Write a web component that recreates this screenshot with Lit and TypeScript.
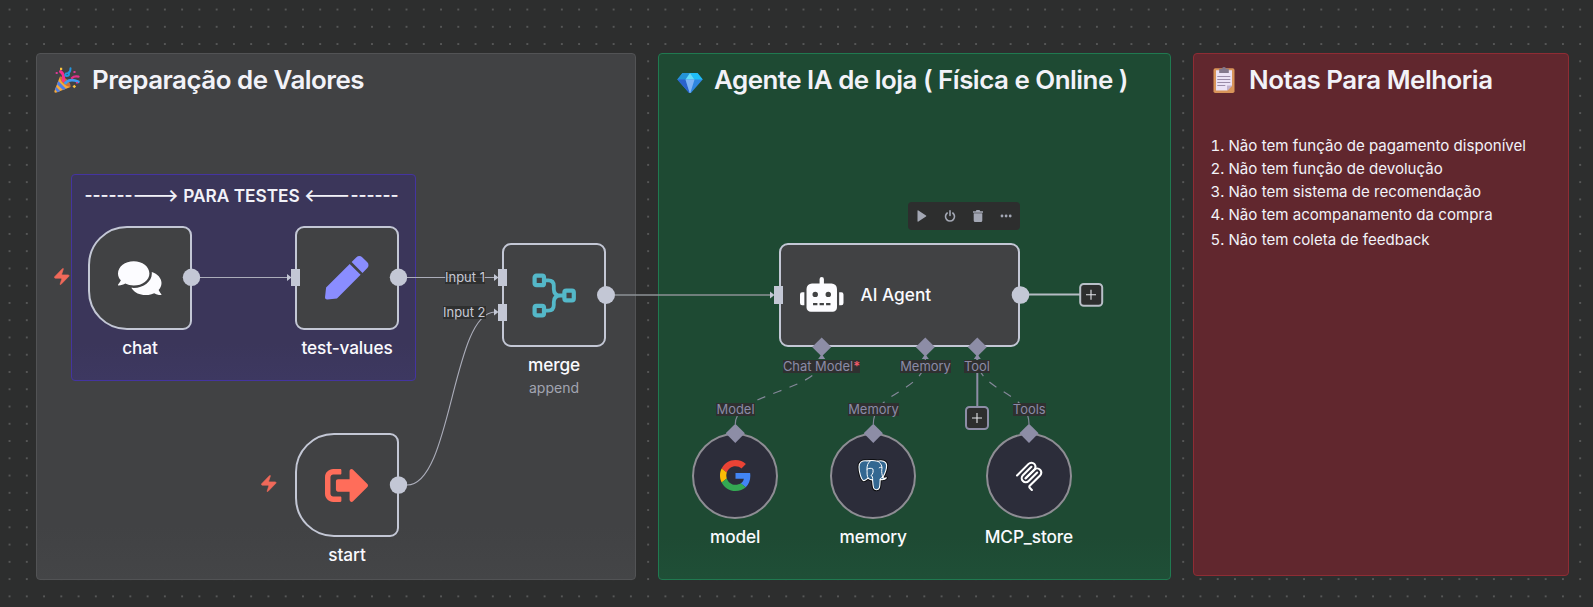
import { LitElement, html, svg, css, nothing, type TemplateResult } from "lit";
import { customElement, property } from "lit/decorators.js";
import { classMap } from "lit/directives/class-map.js";
import { styleMap } from "lit/directives/style-map.js";

type Box = { x: number; y: number; w: number; h: number };

const place = (b: Partial<Box>) =>
  styleMap({
    left: `${b.x}px`,
    top: `${b.y}px`,
    ...(b.w ? { width: `${b.w}px` } : {}),
    ...(b.h ? { height: `${b.h}px` } : {}),
  });

const icons: Record<string, TemplateResult> = {
  party: html`<svg viewBox="0 0 26 26" width="26" height="26">
    <path d="M6 9.500 16.500 20 2.500 25.600Q-.3 26.300.6 23.500Z" fill="#f6a93b" />
    <path d="M4.300 14 12 21.800 9 23 3 17.300ZM2 19.800 6.200 24.100 3.500 25.200 1.200 22.500Z" fill="#4f7fe8" />
    <path d="M6 9.500Q10 9.500 13.500 13T16.500 20Q12.500 19.500 9 16.200T6 9.500Z" fill="#c9703c" />
    <path d="M6.500 4.500Q10.500 7 9.500 13.500" fill="none" stroke="#f62d8f" stroke-width="3" stroke-linecap="round" />
    <path d="M11.500 16Q16 11 24.300 14.700" fill="none" stroke="#3f9bf0" stroke-width="2.800" stroke-linecap="round" />
    <path d="M16.500 1.200Q16.500 7 12 6.500Q10 9 13 9Q16 9 14.500 5.500" fill="none" stroke="#2196e0" stroke-width="2" stroke-linecap="round" />
    <path d="M18 11Q20 8.700 24.500 9.600" fill="none" stroke="#e0308a" stroke-width="2.300" stroke-linecap="round" />
    <path d="M6 .7h2.200v2.200H6ZM20.300 17.800l1.800 1.700-1.800 1.800-1.800-1.800Z" fill="#f9c23c" />
    <path d="M1.700 5h2v2h-2ZM19.500 4h2v2h-2ZM22 15h2v1.500h-2Z" fill="#d83a94" />
  </svg>`,
  gem: html`<svg viewBox="0 0 26 26" width="26" height="26">
    <path d="M5.500 6h15L25.700 12.600 13 27 .3 12.600Z" fill="#2f86e0" />
    <path d="M5.500 6H13L8.500 12.600H.3Z" fill="#2493d6" />
    <path d="M13 6h7.500l5.200 6.600h-8.200Z" fill="#1fc0f7" />
    <path d="M13 6l4.500 6.600h-9Z" fill="#63dcf7" />
    <path d="M.3 12.600h8.200L13 27Z" fill="#2a62cc" />
    <path d="M8.500 12.600h9L13 27Z" fill="#7fb3f5" />
  </svg>`,
  clipboard: html`<svg viewBox="0 0 22 26" width="22" height="26">
    <rect x=".5" y="1.200" width="21" height="24.800" rx="1.800" fill="#d9955a" />
    <path d="M3 3.300h16v15.200l-5 5H3Z" fill="#ebe2f5" />
    <path d="M19 18.500v.5l-4.500 4.500H14v-5Z" fill="#c2b3cf" />
    <path d="M4.300 9.500h13M4.300 12.500h13M4.300 15.500h13M4.300 18.500h8" stroke="#9a8ca8" stroke-width="1.100" />
    <path d="M6.200 1.700H9a2 1.700 0 0 1 4 0h2.800V6H6.200Z" fill="#83788c" />
  </svg>`,
  chat: html`<svg viewBox="0 32 576 448" width="43.500" height="34.500" fill="#fcfcff">
    <path
      d="M416 192c0-88.400-93.100-160-208-160S0 103.600 0 192c0 34.300 14.100 65.900 38 92-13.400 30.200-35.500 54.200-35.800 54.500-2.200 2.300-2.800 5.700-1.500 8.700S4.800 352 8 352c36.600 0 66.900-12.300 88.700-25 32.200 15.700 70.300 25 111.300 25 114.900 0 208-71.600 208-160zm122 220c23.900-26 38-57.700 38-92 0-66.900-53.500-124.200-129.300-148.100.9 6.600 1.300 13.300 1.300 20.100 0 105.900-107.700 192-240 192-10.800 0-21.300-.8-31.700-1.900C207.800 439.600 281.800 480 368 480c41 0 79.100-9.200 111.300-25 21.800 12.700 52.100 25 88.700 25 3.200 0 6.100-1.900 7.300-4.800 1.300-2.900.7-6.300-1.500-8.700-.3-.3-22.400-24.200-35.800-54.500z"
    />
  </svg>`,
  pen: html`<svg viewBox="0 0 512 512" width="43.500" height="43.500" fill="#8a8dff">
    <path
      d="M290.740 93.240l128.020 128.020-277.990 277.990-114.140 12.600C11.350 513.540-1.560 500.620.14 485.340l12.700-114.220 277.900-277.880zm207.200-19.060l-60.110-60.110c-18.750-18.750-49.160-18.750-67.910 0l-56.550 56.550 128.020 128.020 56.550-56.550c18.750-18.760 18.750-49.160 0-67.910z"
    />
  </svg>`,
  merge: html`<svg viewBox="0 0 44 45" width="44" height="45" fill="none" stroke="#54b8c9" stroke-width="4.200">
    <rect x="2.600" y="2.600" width="9.400" height="9.600" rx="1.800" />
    <rect x="2.600" y="32.800" width="9.400" height="9.600" rx="1.800" />
    <rect x="32.400" y="17.700" width="9.400" height="9.600" rx="1.800" />
    <path d="M13 7.400h3.300q5.500 0 5.500 5.500v3q0 6.600 6.600 6.600H31M13 37.600h3.300q5.500 0 5.500-5.500v-3q0-6.600 6.600-6.600" stroke-width="3.800" />
  </svg>`,
  exit: html`<svg class="exit" viewBox="0 64 504 384" width="43" height="33" fill="#ff6d5a">
    <path
      d="M497 273L329 441c-15 15-41 4.500-41-17v-96H152c-13.300 0-24-10.700-24-24v-96c0-13.300 10.700-24 24-24h136V88c0-21.400 25.900-32 41-17l168 168c9.300 9.400 9.300 24.600 0 34zM192 436v-40c0-6.600-5.400-12-12-12H96c-17.700 0-32-14.300-32-32V160c0-17.700 14.300-32 32-32h84c6.600 0 12-5.400 12-12V76c0-6.600-5.400-12-12-12H96c-53 0-96 43-96 96v192c0 53 43 96 96 96h84c6.600 0 12-5.400 12-12z"
    />
  </svg>`,
  robot: html`<svg viewBox="0 0 640 512" width="43.500" height="34.800" fill="#fcfcff">
    <path
      d="M32,224H64V416H32A32,32,0,0,1,0,384V256A32,32,0,0,1,32,224Zm512-48V448a64,64,0,0,1-64,64H160a64,64,0,0,1-64-64V176a80,80,0,0,1,80-80H288V32a32,32,0,0,1,64,0V96H464A80,80,0,0,1,544,176ZM264,256a40,40,0,1,0-40,40A40,40,0,0,0,264,256Zm-8,128H192v32h64Zm96,0H288v32h64ZM456,256a40,40,0,1,0-40,40A40,40,0,0,0,456,256Zm-8,128H384v32h64ZM640,256V384a32,32,0,0,1-32,32H576V224h32A32,32,0,0,1,640,256Z"
    />
  </svg>`,
  google: html`<svg viewBox="0 0 48 48" width="31" height="31">
    <path fill="#ea4335" d="M24 9.500c3.540 0 6.710 1.220 9.210 3.600l6.850-6.850C35.900 2.380 30.470 0 24 0 14.620 0 6.510 5.380 2.560 13.220l7.980 6.190C12.430 13.720 17.740 9.500 24 9.500z" />
    <path fill="#4285f4" d="M46.980 24.550c0-1.570-.15-3.090-.38-4.550H24v9.020h12.940c-.58 2.960-2.260 5.480-4.780 7.180l7.730 6c4.510-4.180 7.090-10.360 7.090-17.650z" />
    <path fill="#fbbc05" d="M10.530 28.590c-.48-1.450-.76-2.990-.76-4.590s.27-3.140.76-4.590l-7.980-6.190C.92 16.460 0 20.120 0 24c0 3.880.92 7.540 2.560 10.780l7.970-6.190z" />
    <path fill="#34a853" d="M24 48c6.480 0 11.930-2.130 15.890-5.810l-7.730-6c-2.150 1.450-4.920 2.300-8.160 2.300-6.260 0-11.570-4.220-13.470-9.910l-7.980 6.190C6.510 42.620 14.620 48 24 48z" />
  </svg>`,
  postgres: html`<svg viewBox="-1 -1 32 33" width="32" height="33" stroke-linejoin="round" stroke-linecap="round">
    <g fill="#336791" stroke="#0c0d10" stroke-width="3">
      <path d="M9 .9C4 .2 1 2.300 1 7c0 4.500 2.200 13.300 4.800 13.600 1.800.2 3-2.300 4.500-2.300 1.400 1.200 2.900 1.700 4.300 1.600.2 3 .3 6 1 8 1 2.600 5.200 2.300 5.900-.5.600-2.400.5-5.400.7-8 2.300.4 5 0 6.200-1.500-1.500.4-3.200.3-3.600-.4C27.300 13 28.700 8 28.600 5.300 28.300 1 23.500.2 19.700 1.200 16 .2 12.500.3 9 .9Z" />
    </g>
    <path d="M9 .9C4 .2 1 2.300 1 7c0 4.500 2.200 13.300 4.800 13.600 1.800.2 3-2.300 4.500-2.300 1.400 1.200 2.900 1.700 4.300 1.600.2 3 .3 6 1 8 1 2.600 5.200 2.300 5.900-.5.600-2.400.5-5.400.7-8 2.300.4 5 0 6.200-1.500-1.500.4-3.200.3-3.600-.4C27.300 13 28.700 8 28.600 5.300 28.300 1 23.500.2 19.700 1.200 16 .2 12.500.3 9 .9Z" fill="#336791" stroke="#fff" stroke-width="1.100" />
    <g fill="none" stroke="#fff" stroke-width="1">
      <path d="M10.300 18.300C8.500 16 9.300 12.500 9 9.500 8.800 6 9.800 2.500 12.300 1" />
      <path d="M14.600 19.900C14.800 17.500 14.500 16 13 15.500c2-1.500 2.500-4 1.900-6.500-1.500-1-4-1-5.800.2" />
      <path d="M19.700 1.200C23 3 24.500 6.500 23.800 9.200c-.4 3.200.3 5.300 1 8.800M21.200 7.800c.9-.7 1.900-.7 2.700-.1M22.200 19.400c0-1.200.9-1.700 2.500-2.200" />
    </g>
  </svg>`,
  mcp: html`<svg viewBox="0 0 180 180" width="30.500" height="30.500" fill="none" stroke="#fff" stroke-width="12.500" stroke-linecap="round">
    <path d="M18 84.853L85.882 16.971C95.255 7.598 110.451 7.598 119.823 16.971C129.196 26.343 129.196 41.539 119.823 50.912L68.558 102.177" />
    <path d="M69.265 101.470L119.823 50.912C129.196 41.539 144.392 41.539 153.765 50.912L154.118 51.265C163.491 60.638 163.491 75.834 154.118 85.206L92.725 146.600C89.601 149.724 89.601 154.789 92.725 157.913L105.331 170.520" />
    <path d="M102.853 33.941L52.648 84.146C43.276 93.518 43.276 108.714 52.648 118.087C62.021 127.459 77.217 127.459 86.589 118.087L136.794 67.882" />
  </svg>`,
  bolt: html`<svg viewBox="2.500 1.500 19 21" width="15.500" height="17.100" fill="#f0695a" stroke="#f0695a" stroke-width=".8">
    <path d="M4 14a1 1 0 0 1-.78-1.630l9.900-10.200a.5.5 0 0 1 .86.46l-1.920 6.020A1 1 0 0 0 13 10h7a1 1 0 0 1 .78 1.630l-9.900 10.200a.5.5 0 0 1-.86-.46l1.920-6.020A1 1 0 0 0 11 14z" />
  </svg>`,
  play: html`<svg viewBox="0 0 12 14" width="12" height="14"><path d="M1.500 1.900v10.200q0 1 .9.500l7.600-5q.7-.6 0-1.200l-7.600-5q-.9-.5-.9.500Z" fill="#a3a7b4" /></svg>`,
  power: html`<svg viewBox="0 0 12 14" width="12" height="14" fill="none" stroke="#a3a7b4" stroke-width="1.600" stroke-linecap="round"><path d="M6 1.800v4.600M3.200 4a4.500 4.500 0 1 0 5.600 0" /></svg>`,
  trash: html`<svg viewBox="0 0 12 14" width="12" height="14" fill="#a3a7b4"><path d="M1 2.300h2.700L4.500 1h3l.8 1.300H11v1.400H1ZM1.700 4.300h8.600v7.200q0 1.500-1.500 1.500H3.200q-1.500 0-1.500-1.500Z" /></svg>`,
  dots: html`<svg viewBox="0 0 12 14" width="12" height="14" fill="#a3a7b4"><circle cx="2" cy="7" r="1.400" /><circle cx="6.100" cy="7" r="1.400" /><circle cx="10.200" cy="7" r="1.400" /></svg>`,
};

@customElement("sticky-note")
export class StickyNote extends LitElement {
  @property() tone = "gray";
  @property() icon = "";
  @property() heading = "";
  @property() lead = "";
  @property({ attribute: false }) items: string[] = [];

  static styles = css`
    :host { display: block; height: 100%; }
    .note { box-sizing: border-box; height: 100%; border: 1px solid; border-radius: 4px; }
    .gray { background: linear-gradient(#414244 90%, #444547); border-color: #525355; padding: 10px 16px; }
    .green { background: linear-gradient(#1e4a33 92%, #1f4f37); border-color: #207950; padding: 10px 16px; }
    .red { background: #61272e; border-color: #8f2c34; padding: 10px 16.500px; }
    .purple { background: linear-gradient(#3b365a 82%, #3d3861); border-color: #4434a0; padding: 9px 16px 9px 12px; }
    .title { margin: 0; display: flex; align-items: center; gap: 11.500px; height: 32px; font-size: 25.900px; font-weight: 600; line-height: 32px; letter-spacing: -0.490px; color: #f2f2f8; white-space: pre; }
    .title svg { flex: none; margin-left: 2px; }
    .gray svg { margin-left: 1px; }
    .gray .title { gap: 12px; }
    .green .title { gap: 11px; }
    .red svg { margin: 0 2.500px 0 2.500px; }
    .caption { margin: 0; text-align: center; white-space: nowrap; font-size: 17.260px; line-height: 24px; font-weight: 600; color: #f2f2f8; }
    .lead { font-feature-settings: "case"; }
    ol { list-style: none; margin: 38px 0 0; padding: 0; font-size: 15.100px; line-height: 23px; color: #f2f2f8; white-space: nowrap; }
    li { display: flex; }
    .num { width: 18px; font-feature-settings: "tnum"; }
    li:last-child { padding-top: 2px; }
  `;

  render() {
    return html`<section class=${classMap({ note: true, [this.tone]: true })}>
      ${this.icon
        ? html`<h2 class="title">${icons[this.icon]}<span>${this.heading}</span></h2>`
        : html`<p class="caption"><span class="lead">${this.lead}</span>${this.heading}</p>`}
      ${this.items.length
        ? html`<ol>${this.items.map((t, i) => html`<li><span class="num">${i + 1}.</span><span>${t}</span></li>`)}</ol>`
        : nothing}
    </section>`;
  }
}

@customElement("flow-node")
export class FlowNode extends LitElement {
  @property() kind = "plain";
  @property() icon = "";
  @property() label = "";
  @property() sub = "";

  static styles = css`
    :host { display: flex; flex-direction: column; align-items: center; }
    .box { box-sizing: border-box; flex: none; width: 104px; height: 104px; border: 2px solid #c3c7d5; border-radius: 9px; background: #414244; display: flex; align-items: center; justify-content: center; }
    .trigger { border-radius: 39px 9px 9px 39px; }
    .wide { width: 241px; justify-content: flex-start; padding-left: 19px; gap: 17px; }
    .wide svg { padding-bottom: 1px; }
    .model { width: 86.400px; height: 86.400px; border-radius: 50%; background: #2c2d3a; border-color: #8e8d94; }
    .label { font-size: 17.260px; font-weight: 500; line-height: 22px; letter-spacing: -0.110px; color: #fafafe; margin-top: 7px; white-space: nowrap; }
    .wide .label { margin: 0; letter-spacing: 0; }
    .sub { font-size: 14px; line-height: 18px; color: #a2a5b1; margin-top: 3px; }
    svg { display: block; }
    .exit { margin-right: 2px; }
  `;

  render() {
    const label = html`<span class="label">${this.label}</span>`;
    const wide = this.kind === "wide";
    return html`<div class=${classMap({ box: true, [this.kind]: true })}>${icons[this.icon]}${wide ? label : nothing}</div>
      ${wide ? nothing : label}${this.sub ? html`<span class="sub">${this.sub}</span>` : nothing}`;
  }
}

const stickies = [
  { x: 36, y: 53, w: 600, h: 527, tone: "gray", icon: "party", heading: "Preparação de Valores", items: [] },
  { x: 658, y: 53, w: 513, h: 527, tone: "green", icon: "gem", heading: "Agente IA de loja ( Física e Online )", items: [] },
  {
    x: 1193, y: 53, w: 376, h: 523, tone: "red", icon: "clipboard", heading: "Notas Para Melhoria",
    items: [
      "Não tem função de pagamento disponível",
      "Não tem função de devolução",
      "Não tem sistema de recomendação",
      "Não tem acompanamento da compra",
      "Não tem coleta de feedback",
    ],
  },
  { x: 71, y: 174, w: 345, h: 207, tone: "purple", icon: "", lead: "--", heading: "-------> PARA TESTES <---------", items: [] },
];

const nodes = [
  { x: 88, y: 226, w: 104, kind: "trigger", icon: "chat", label: "chat", sub: "" },
  { x: 295, y: 226, w: 104, kind: "plain", icon: "pen", label: "test-values", sub: "" },
  { x: 502, y: 243, w: 104, kind: "plain", icon: "merge", label: "merge", sub: "append" },
  { x: 295, y: 433, w: 104, kind: "trigger", icon: "exit", label: "start", sub: "" },
  { x: 779, y: 243, w: 241, kind: "wide", icon: "robot", label: "AI Agent", sub: "" },
  { x: 692, y: 432.600, w: 86.400, kind: "model", icon: "google", label: "model", sub: "" },
  { x: 830, y: 432.600, w: 86.400, kind: "model", icon: "postgres", label: "memory", sub: "" },
  { x: 985.700, y: 432.600, w: 86.400, kind: "model", icon: "mcp", label: "MCP_store", sub: "" },
];

const labels = [
  { x: 445, y: 271, w: 40, text: "Input 1", tone: "main" },
  { x: 443, y: 306, w: 42.500, text: "Input 2", tone: "main" },
  { x: 783, y: 360, w: 77, text: "Chat Model", tone: "sub", required: true },
  { x: 900, y: 360, w: 51, text: "Memory", tone: "sub" },
  { x: 964, y: 360, w: 26, text: "Tool", tone: "sub" },
  { x: 716, y: 403, w: 39, text: "Model", tone: "sub" },
  { x: 848, y: 403, w: 51, text: "Memory", tone: "sub" },
  { x: 1013, y: 403, w: 32.500, text: "Tools", tone: "sub" },
];

const arrow = (x: number, y: number) => svg`<path d="M${x - 4.500} ${y - 3.500}v7l4.500-3.500Z" fill="#c3c7d5"/>`;
const diamond = (x: number, y: number) => svg`<path d="M${x} ${y - 9.600}l9.600 9.600-9.600 9.600-9.600-9.600Z" fill="#8d8da6"/>`;

@customElement("app-root")
export class AppRoot extends LitElement {
  static styles = css`
    :host {
      display: block; position: relative; width: 1593px; height: 607px; overflow: hidden;
      background: #2d2e2e; font-family: Inter, "Noto Sans", sans-serif;
    }
    .item { position: absolute; }
    .layer { position: absolute; inset: 0; display: block; }
    .tag { display: flex; justify-content: center; height: 13px; line-height: 13px; font-size: 12.950px; white-space: nowrap; background: #2f3030; }
    .main { color: #c8cad6; }
    .sub { color: #8b8ba6; }
    .req { color: #f45b69; font-weight: 600; }
    .toolbar { display: flex; justify-content: space-around; align-items: center; border-radius: 4px; background: #2d2e2e; }
  `;

  render() {
    return html`
      <svg class="layer" width="1593" height="607">
        <defs>
          <pattern id="grid" x=".9" y="0.900" width="17.260" height="17.260" patternUnits="userSpaceOnUse">
            <circle cx="8.630" cy="8.630" r=".72" fill="#929393" />
          </pattern>
        </defs>
        <rect width="1593" height="607" fill="url(#grid)" />
      </svg>
      ${stickies.map(
        (s) => html`<sticky-note class="item" style=${place(s)} .tone=${s.tone} .icon=${s.icon} .lead=${s.lead ?? ""} .heading=${s.heading} .items=${s.items}></sticky-note>`,
      )}
      <svg class="layer" width="1593" height="607" fill="none" stroke="#abadba" stroke-width="1.100">
        <path d="M200 277.500H288M407 277.500H495M407 485C452 485 452 312 495 312" />
        <path d="M615 295H771" stroke="#8d9296" stroke-width="1.300" />
        <path d="M1029 294.500H1080" stroke="#b5bbc4" stroke-width="2.200" />
        <path d="M977.300 355V406" stroke="#8d8da6" stroke-width="2" />
        <g stroke="#85889a" stroke-width="1.200" stroke-dasharray="8.600 8.600">
          <path d="M735.300 424C735.300 391.500 821.700 391.500 821.700 359" />
          <path d="M873.300 424C873.300 391.500 925.300 391.500 925.300 359" />
          <path d="M1029 424C1029 391.500 977.300 391.500 977.300 359" />
        </g>
      </svg>
      ${labels.map(
        (l) => html`<div class=${classMap({ item: true, tag: true, [l.tone]: true })} style=${place(l)}>
          <span>${l.text}</span>${l.required ? html`<span class="req">*</span>` : nothing}
        </div>`,
      )}
      ${nodes.map((n) => html`<flow-node class="item" style=${place(n)} .kind=${n.kind} .icon=${n.icon} .label=${n.label} .sub=${n.sub}></flow-node>`)}
      <div class="item" style=${place({ x: 54, y: 268 })}>${icons.bolt}</div>
      <div class="item" style=${place({ x: 261, y: 475 })}>${icons.bolt}</div>
      <div class="item toolbar" style=${place({ x: 908, y: 202, w: 112, h: 28 })}>${icons.play}${icons.power}${icons.trash}${icons.dots}</div>
      <svg class="layer" width="1593" height="607">
        <path d="M444 277.500h41" stroke="#abadba" stroke-width="1" opacity=".25" />
        <g fill="#c3c7d5">
          <circle cx="191.500" cy="277.300" r="8.700" /><circle cx="398.500" cy="277.300" r="8.700" />
          <circle cx="398.500" cy="485" r="8.700" /><circle cx="606" cy="295" r="9" /><circle cx="1020.500" cy="295" r="8.800" />
          <path d="M291 269h9v17h-9ZM498 269h9v17h-9ZM498 304h9v17h-9ZM774 286h9v18h-9Z" />
        </g>
        ${arrow(291.500, 277.500)}${arrow(498.500, 277.500)}${arrow(498.500, 312)}${arrow(774.500, 295)}
        ${[821.700, 925.300, 977.300].map((x) => svg`${diamond(x, 347)}<path d="M${x} 354l3.500 5h-7Z" fill="#8d8da6"/>`)}
        ${[735.300, 873.300, 1029].map((x) => diamond(x, 433.300))}
        <g fill="#2d2e2e" stroke-width="2">
          <rect x="1080.200" y="284" width="22" height="21.700" rx="3.500" stroke="#b9bfc8" />
          <rect x="966" y="407" width="22" height="22" rx="3.500" stroke="#8d8da6" />
        </g>
        <path d="M1086 294.700h10M1091 289.700v10M972 418h10M977 413v10" stroke="#e4e5ea" stroke-width="1.100" />
      </svg>
    `;
  }
}
